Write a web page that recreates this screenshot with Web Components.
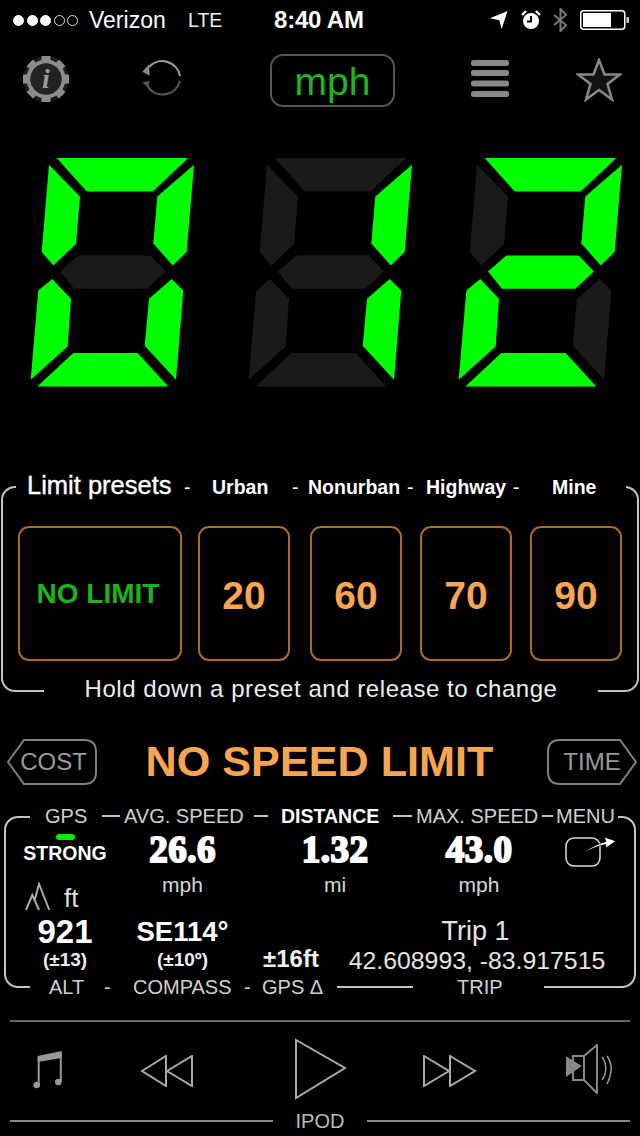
<!DOCTYPE html>
<html>
<head>
<meta charset="utf-8">
<title>Speedometer</title>
<style>
  html,body{margin:0;background:#000;overflow:hidden}
  body{font-family:"Liberation Sans",Arial,sans-serif;color:#fff;width:640px;height:1136px}
</style>
</head>
<body>
<status-bar></status-bar>
<tool-bar></tool-bar>
<speed-display value="012"></speed-display>
<limit-presets></limit-presets>
<limit-status></limit-status>
<trip-panel></trip-panel>
<ipod-bar></ipod-bar>

<script>
const FONT = `"Liberation Sans",Arial,sans-serif`;

// small helper, every element below is just a shadow root with a template string
class Base extends HTMLElement {
  constructor() {
    super();
    this.attachShadow({ mode: "open" });
  }
  connectedCallback() {
    this.shadowRoot.innerHTML = this.render();
  }
}

class StatusBar extends Base {
  render() {
    const dots = [1, 1, 1, 0, 0]
      .map((on) => `<i class="${on ? "on" : ""}"></i>`)
      .join("");
    return /*html*/ `
      <style>
        :host{display:flex;align-items:center;height:40px;font:23px/40px ${FONT};color:#fff}
        .dots{display:flex;gap:2.600px;margin-left:13px;width:76px}
        .dots i{width:11px;height:11px;flex:none;border-radius:50%;border:1px solid #ddd;box-sizing:border-box}
        .dots i.on{background:#fff;border-color:#fff}
        .car{width:99px;font-size:23px}
        .net{width:86px;font-size:19.500px;color:#eee}
        .time{width:216px;font-weight:bold;font-size:24px;letter-spacing:-.2px}
        svg{display:block;flex:none}
      </style>
      <div class="dots">${dots}</div>
      <span class="car">Verizon</span>
      <span class="net">LTE</span>
      <span class="time">8:40 AM</span>
      <svg width="18" height="18" viewBox="0 0 18 18"><path d="M0 7.300 17.500 0 11.700 18 9.300 9.300Z" fill="#fff"/></svg>
      <svg style="margin-left:13px" width="20" height="20" viewBox="0 0 20 20">
        <circle cx="10" cy="11" r="8" fill="#fff"/>
        <path d="M10 6v5.500H6" fill="none" stroke="#000" stroke-width="2"/>
        <path d="M1 5 5 1M19 5 15 1" stroke="#fff" stroke-width="2.400"/>
      </svg>
      <svg style="margin-left:12px" width="15" height="24" viewBox="0 0 15 24">
        <path d="M1 7 13 17 7.500 23V1L13 7 1 17" fill="none" stroke="#777" stroke-width="2"/>
      </svg>
      <svg style="margin-left:12px" width="50" height="20" viewBox="0 0 50 20">
        <rect x=".75" y=".75" width="44" height="18.500" rx="3" fill="none" stroke="#fff" stroke-width="1.500"/>
        <rect x="3" y="3" width="28" height="14" fill="#fff"/>
        <path d="M46.500 7H48a1 1 0 0 1 1 1v4a1 1 0 0 1-1 1H46.500Z" fill="#ccc"/>
      </svg>
    `;
  }
}

class ToolBar extends Base {
  render() {
    const teeth = [0, 45, 90, 135, 180, 225, 270, 315]
      .map((a) => `<path d="M21.500 3h9v7h-9z" transform="rotate(${a} 26 26)"/>`)
      .join("");
    return /*html*/ `
      <style>
        :host{display:grid;grid-template-columns:122px 128px 201px 105px 46px;height:80px;padding-left:20px;align-items:center}
        svg{display:block}
        .unit{width:125px;height:53px;box-sizing:border-box;border:2px solid #555;border-radius:13px;
          font:39px/52px ${FONT};color:#1fb51f;text-align:center;margin-top:1px}
      </style>
      <svg width="52" height="52" viewBox="0 0 52 52" style="margin-top:-2px">
        <circle cx="26" cy="26" r="23" fill="#1c1c1c"/>
        <g fill="#8c8c8c">${teeth}</g>
        <circle cx="26" cy="26" r="17.500" fill="none" stroke="#8c8c8c" stroke-width="4"/>
        <circle cx="26" cy="26" r="15.500" fill="#222"/>
        <text x="26" y="35" text-anchor="middle" font-family="Liberation Serif" font-style="italic" font-weight="bold" font-size="28" fill="#999">i</text>
      </svg>
      <svg width="44" height="46" viewBox="0 0 44 46" style="margin-top:-4px">
        <path d="M7 12A18 18 0 0 1 38 21" fill="none" stroke="#999" stroke-width="2.200"/>
        <path d="M.3 16.700 7 9.300 7.700 20.700Z" fill="#888"/>
        <path d="M38 26A18 18 0 0 1 6 32" fill="none" stroke="#555" stroke-width="2.200"/>
        <path d="M.3 27.300 7.700 26 6.300 33.300Z" fill="#555"/>
      </svg>
      <div class="unit">mph</div>
      <svg width="38" height="38" viewBox="0 0 38 38" style="margin-top:-2px" fill="#888">
        <rect y="0" width="38" height="6" rx="2.500"/><rect y="10" width="38" height="6" rx="2.500"/>
        <rect y="20.500" width="38" height="6" rx="2.500"/><rect y="31" width="38" height="6" rx="2.500"/>
      </svg>
      <svg width="46" height="44" viewBox="0 0 46 44" style="margin-top:-1px">
        <path d="M23 2 28.500 16.500H44L31.500 26 36 41.500 23 32 10 41.500 14.500 26 2 16.500H17.500Z" fill="#111" stroke="#888" stroke-width="2.500"/>
      </svg>
    `;
  }
}

// the seven segments, coordinates taken with the digit's box at 0,0
const SEGMENTS = {
  a: "26.700,0 158.300,0 122.700,33.400 56.700,33.400",
  f: "19,6.700 50,38.400 46,86 23.300,107.400 11.700,94",
  b: "164,6.700 156.700,94 142.700,107.400 123.300,85.400 127.300,38.400",
  g: "30,113.400 48.300,97.400 120.700,97.400 136,113.400 117.300,130.700 44,130.700",
  e: "22.300,121 41,140.700 37.700,188.400 .7,221.700 8.300,132.400",
  c: "141.700,121 153.300,132.400 146,221.700 114.700,187.700 119,140.700",
  d: "43.300,195 107.700,195 138.300,228.400 7.300,228.400",
};
const DIGITS = {
  0: "abcdef", 1: "bc", 2: "abged", 3: "abgcd", 4: "fgbc",
  5: "afgcd", 6: "afgedc", 7: "abc", 8: "abcdefg", 9: "abcdfg",
};

class SevenSeg extends Base {
  render() {
    const lit = DIGITS[this.getAttribute("value")] || "";
    const polys = Object.entries(SEGMENTS)
      .map(([k, pts]) => `<polygon points="${pts}" fill="${lit.includes(k) ? "#00ff00" : "#1a1a1a"}"/>`)
      .join("");
    return `<style>:host{display:block;width:165px;height:230px}svg{display:block}</style>
      <svg width="165" height="230" viewBox="0 0 165 230">${polys}</svg>`;
  }
}

class SpeedDisplay extends Base {
  render() {
    const v = this.getAttribute("value") || "000";
    return `<style>
        :host{display:grid;grid-template-columns:218px 210px 165px;align-content:start;height:366px;box-sizing:border-box;padding:38px 0 0 30px}
      </style>
      ${[...v].map((d) => `<seven-seg value="${d}"></seven-seg>`).join("")}`;
  }
}

class FrameBox extends Base {
  render() {
    return /*html*/ `
      <style>
        :host{display:block;border:2px solid #c4c4c4;border-radius:14px;background:#000;color:#fff}
        ::slotted([slot=top]),::slotted([slot=bottom]){background:#000;height:28px}
      </style>
      <slot name="top"></slot><slot></slot><slot name="bottom"></slot>
    `;
  }
}

class LimitPresets extends Base {
  render() {
    const btn = (t, cls = "") => `<div class="btn ${cls}"><span>${t}</span></div>`;
    return /*html*/ `
      <style>
        :host{display:block;margin:0 1px;font-family:${FONT}}
        .legend{display:flex;font:bold 19.500px/28px ${FONT};white-space:nowrap}
        .top{margin:-15px 11px 0 13px}
        .bottom{margin:16px 39px -15px 41px;justify-content:center;font:24px/24px ${FONT};letter-spacing:.55px;color:#eee}
        .top span{display:block;flex:none}
        .top .dash{font-weight:normal}
        .title{font-weight:normal;font-size:25.500px;-webkit-text-stroke:.4px #fff;margin-top:-2px}
        .row{display:grid;grid-template-columns:180px 112px 110px 110px 92px;margin:25px 0 0 15px}
        .btn{box-sizing:border-box;height:135px;border:2px solid #a96c20;border-radius:11px;
          display:flex;align-items:center;justify-content:center;font:bold 39px ${FONT};color:#f7a552}
        .btn span{padding-top:5px}
        .btn.wide{width:164px;font-size:28px;color:#1db41a}
        .btn.wide span{padding:1px 4px 0 0}
        .btn:not(.wide){width:92px}
      </style>
      <frame-box>
        <div slot="top" class="legend top">
          <span class="title" style="width:157px;margin-left:11px">Limit presets</span>
          <span class="dash" style="width:28px">-</span>
          <span style="width:80px">Urban</span>
          <span class="dash" style="width:16px">-</span>
          <span style="width:99px">Nonurban</span>
          <span class="dash" style="width:19px">-</span>
          <span style="width:87px">Highway</span>
          <span class="dash" style="width:39px">-</span>
          <span>Mine</span>
        </div>
        <div class="row">
          ${btn("NO LIMIT", "wide")}${btn(20)}${btn(60)}${btn(70)}${btn(90)}
        </div>
        <div slot="bottom" class="legend bottom">Hold down a preset and release to change</div>
      </frame-box>
    `;
  }
}

class TagButton extends Base {
  render() {
    const right = this.hasAttribute("right");
    const shape = right
      ? "M13 1H73L89 23 73 45H13Q1 45 1 33V13Q1 1 13 1Z"
      : "M17 1H77Q89 1 89 13V33Q89 45 77 45H17L1 23Z";
    return /*html*/ `
      <style>
        :host{display:grid;width:90px;height:46px;font:24px/46px ${FONT};color:#9a9a9a;text-align:center}
        svg,span{grid-area:1/1}
        span{padding-left:${right ? 0 : 3}px}
      </style>
      <svg width="90" height="46" viewBox="0 0 90 46"><path d="${shape}" fill="none" stroke="#808080" stroke-width="2"/></svg>
      <span><slot></slot></span>
    `;
  }
}

class LimitStatus extends Base {
  render() {
    return /*html*/ `
      <style>
        :host{display:flex;align-items:center;justify-content:space-between;height:46px;margin:47px 3px 0 7px}
        .msg{font:bold 43.200px/46px ${FONT};color:#f7a552;white-space:nowrap;margin:-2px 5px 0 0}
      </style>
      <tag-button>COST</tag-button>
      <div class="msg">NO SPEED LIMIT</div>
      <tag-button right>TIME</tag-button>
    `;
  }
}

class TripPanel extends Base {
  render() {
    return /*html*/ `
      <style>
        :host{display:block;margin:31px 4px 0;font-family:${FONT};color:#fff}
        .legend{display:flex;align-items:center;font:20px/28px ${FONT};color:#d0d0d0;white-space:nowrap}
        .legend span,.legend b{flex:none;display:block}
        .legend b{font-weight:bold;color:#fff;font-size:19.500px}
        .legend u{flex:none;display:block;height:2px;background:#c4c4c4}
        .top{margin:-16px 16px 0 24px;padding-bottom:1px;box-sizing:border-box}
        .bottom{margin:0 90px -15px 24px}
        .grid{display:grid;grid-template-columns:118px 117px 100px 88px 100px 1fr;
          grid-template-rows:38px 46px 35px 24px;text-align:center}
        .grid>div{display:flex;align-items:center;justify-content:center;white-space:nowrap}
        .big{font:bold 37px "Liberation Serif",serif;-webkit-text-stroke:2px #fff;letter-spacing:.5px;padding-top:1px}
        .unit{font-size:21px;color:#d8d8d8;align-items:flex-start !important;padding-top:5px}
        .strong{flex-direction:column;font:bold 19.500px/24px ${FONT}}
        .led{width:19px;height:6px;border-radius:3px;background:#00f000;margin-bottom:1px}
        .ft{font-size:26px;color:#ddd;gap:13px;align-items:flex-end !important;justify-content:flex-start !important;padding-left:18px}
        .alt{font:bold 33px ${FONT}}
        .tol{font:bold 19px ${FONT};color:#eee;padding-bottom:2px}
        .dir{font:bold 27.500px ${FONT}}
        .trip{font-size:27px;color:#e4e4e4;padding-right:24px}
        .coords{font-size:24.800px;color:#e4e4e4;padding-right:21px}
        .gps{font:bold 24px ${FONT};color:#eee;padding-bottom:4px}
        .share{justify-content:flex-start !important;padding-left:36px}
      </style>
      <frame-box>
        <div slot="top" class="legend top">
          <span style="margin-left:15px;width:57px">GPS</span>
          <u style="width:18px;margin-right:4px"></u>
          <span style="width:130px">AVG. SPEED</span>
          <u style="width:14px;margin-right:13px"></u>
          <b style="width:112px">DISTANCE</b>
          <u style="width:19px;margin-right:4px"></u>
          <span style="width:126px">MAX. SPEED</span>
          <u style="width:11px;margin-right:3px"></u>
          <span>MENU</span>
        </div>
        <div class="grid">
          <div class="strong"><i class="led"></i>STRONG</div>
          <div class="big">26.6</div>
          <div class="big" style="grid-column:span 2">1.32</div>
          <div class="big">43.0</div>
          <div class="share">
            <svg width="52" height="32" viewBox="0 0 52 32" style="margin-top:5px">
              <rect x="1" y="2" width="34" height="28" rx="8" fill="none" stroke="#ddd" stroke-width="1.500"/>
              <path d="M18 17C26 11 33 8 41 5.500L39 1 51 5 41 12 40.500 8.500C33 10 26 13 18 17Z" fill="#fff" stroke="#000" stroke-width=".8"/>
            </svg>
          </div>

          <div class="ft">
            <svg width="27" height="29" viewBox="0 0 27 29" style="margin-bottom:3px"><path d="M2 28 8.300 13 15 28M11 17 15 2 25.300 28" fill="none" stroke="#aaa" stroke-width="2"/></svg>
            <span>ft</span>
          </div>
          <div class="unit">mph</div>
          <div class="unit" style="grid-column:span 2">mi</div>
          <div class="unit">mph</div>
          <div></div>

          <div class="alt">921</div>
          <div class="dir">SE114°</div>
          <div></div>
          <div class="trip" style="grid-column:span 3">Trip 1</div>

          <div class="tol">(±13)</div>
          <div class="tol">(±10º)</div>
          <div class="gps">±16ft</div>
          <div class="coords" style="grid-column:span 3">42.608993, -83.917515</div>
        </div>
        <div slot="bottom" class="legend bottom">
          <span style="margin-left:19px;width:55px">ALT</span>
          <span style="width:29px">-</span>
          <span style="width:111px">COMPASS</span>
          <span style="width:18px">-</span>
          <span style="width:75px">GPS Δ</span>
          <u style="width:76px;margin-right:44px"></u>
          <span>TRIP</span>
        </div>
      </frame-box>
    `;
  }
}

class IpodBar extends Base {
  render() {
    return /*html*/ `
      <style>
        :host{display:block;margin:32px 10px 0;font-family:${FONT}}
        .rule{height:2px;background:#666}
        .keys{display:grid;grid-template-columns:107px 154px 129px 143px 1fr;align-items:center;height:90px;padding:4px 0 0 23px;box-sizing:border-box}
        svg{display:block}
        svg.low{margin-top:4px}
        .foot{display:flex;align-items:center;height:20px;font:20px/20px ${FONT};color:#bbb;gap:23px;margin-top:-1px}
        .foot i{flex:1;height:2px;background:#888}
      </style>
      <div class="rule"></div>
      <div class="keys">
        <svg class="low" width="32" height="40" viewBox="0 0 32 40" fill="#999">
          <path d="M4.700 5 28.700 0V7L4.700 11Z"/>
          <path d="M5.700 6V34M27.800 2V31" stroke="#999" stroke-width="2" fill="none"/>
          <circle cx="3.700" cy="34" r="3.300"/><circle cx="25.300" cy="31" r="3.300"/>
        </svg>
        <svg class="low" width="54" height="32" viewBox="0 0 54 32" fill="none" stroke="#aaa" stroke-width="2">
          <path d="M2 16 26 1V31ZM27 16 52 1V31Z"/>
        </svg>
        <svg width="54" height="62" viewBox="0 0 54 62" fill="none" stroke="#aaa" stroke-width="2">
          <path d="M2 2 51 30 2 60Z"/>
        </svg>
        <svg class="low" width="54" height="32" viewBox="0 0 54 32" fill="none" stroke="#aaa" stroke-width="2">
          <path d="M1 1 26 16 1 31ZM27 1 52 16 27 31Z"/>
        </svg>
        <svg width="50" height="50" viewBox="0 0 50 50" fill="none" stroke="#888" stroke-width="2">
          <path d="M1 14 14 22 1 31Z" fill="#888"/>
          <path d="M7 12H18V36H7Z"/>
          <path d="M18 12 31 1V49L18 36Z"/>
          <path d="M36 13C41 19 41 30 36 36M41 12C47 20 46 30 41 40" stroke="#999" stroke-width="1.500"/>
        </svg>
      </div>
      <div class="foot"><i></i><span>IPOD</span><i></i></div>
    `;
  }
}

customElements.define("status-bar", StatusBar);
customElements.define("tool-bar", ToolBar);
customElements.define("seven-seg", SevenSeg);
customElements.define("speed-display", SpeedDisplay);
customElements.define("frame-box", FrameBox);
customElements.define("limit-presets", LimitPresets);
customElements.define("tag-button", TagButton);
customElements.define("limit-status", LimitStatus);
customElements.define("trip-panel", TripPanel);
customElements.define("ipod-bar", IpodBar);
</script>
</body>
</html>
